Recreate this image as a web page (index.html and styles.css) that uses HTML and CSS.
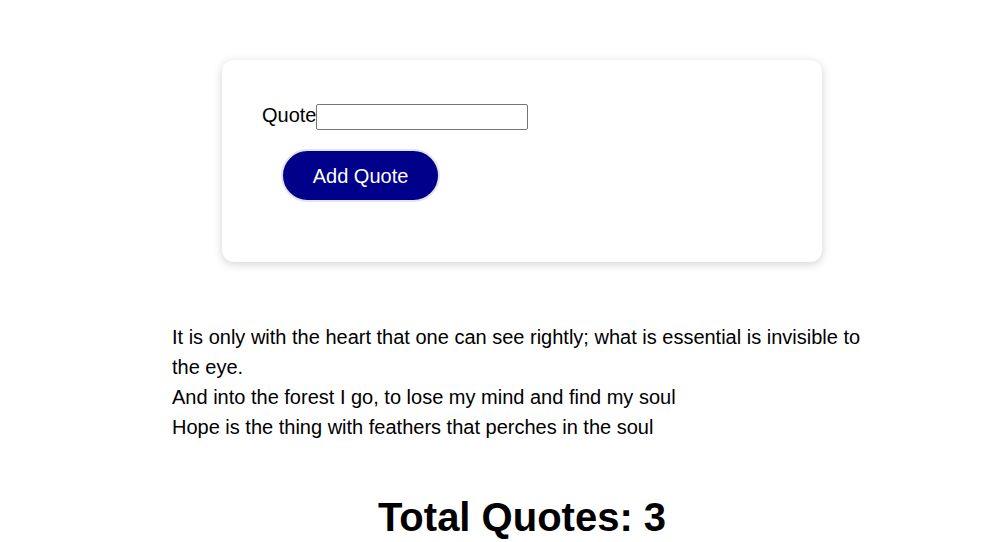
FILE: index.html
```html
<!DOCTYPE html>
<html>
<head>
<meta charset="utf-8">
<link rel="stylesheet" href="styles.css">
</head>
<body>
<main class="app">
  <section class="card">
    <form class="quote-form">
      <div class="field">
        <label class="label" for="q">Quote</label><input class="input" id="q" type="text">
      </div>
      <button class="btn" type="button">Add Quote</button>
    </form>
  </section>
  <div class="quotes">
    <p class="quote">It is only with the heart that one can see rightly; what is essential is invisible to the eye.</p>
    <p class="quote">And into the forest I go, to lose my mind and find my soul</p>
    <p class="quote">Hope is the thing with feathers that perches in the soul</p>
  </div>
  <h1 class="total">Total Quotes: 3</h1>
</main>
</body>
</html>
```
FILE: styles.css
```css
html, body {
  margin: 0;
  padding: 0;
  background: #fff;
}
body {
  font-family: "Liberation Sans", Arial, sans-serif;
  color: #000;
}
.app {
  margin-left: 59px;
  display: flex;
  flex-direction: column;
  align-items: center;
  padding-top: 60px;
}
.card {
  width: 600px;
  height: 202px;
  box-sizing: border-box;
  background: #fff;
  border-radius: 12px;
  box-shadow: 0 2px 10px rgba(0, 0, 0, 0.18);
  padding: 44px 40px;
}
.quote-form {
  display: flex;
  flex-direction: column;
  align-items: flex-start;
  gap: 20px;
}
.field {
  display: flex;
  align-items: center;
  font-size: 20px;
}
.label {
  font-size: 20px;
  margin-bottom: 3px;
}
.input {
  width: 212px;
  height: 26px;
  box-sizing: border-box;
  border: 1px solid #767676;
  border-radius: 2px;
  padding: 0 2px;
  margin: 0;
  font-size: 13px;
}
.btn {
  margin-left: 19px;
  margin-top: -1px;
  width: 159px;
  height: 53px;
  padding: 2px 0 0;
  border-radius: 27px;
  background: #00008b;
  color: #fff;
  border: 2px solid #e4e4ec;
  font-family: "Liberation Sans", Arial, sans-serif;
  font-size: 20px;
  box-sizing: border-box;
}
.quotes {
  width: 700px;
  margin-top: 60px;
  font-size: 20px;
  line-height: 30px;
}
.quote {
  margin: 0;
}
.total {
  margin: 52px 0 0;
  font-size: 40px;
  font-weight: bold;
  line-height: 46px;
}
```
